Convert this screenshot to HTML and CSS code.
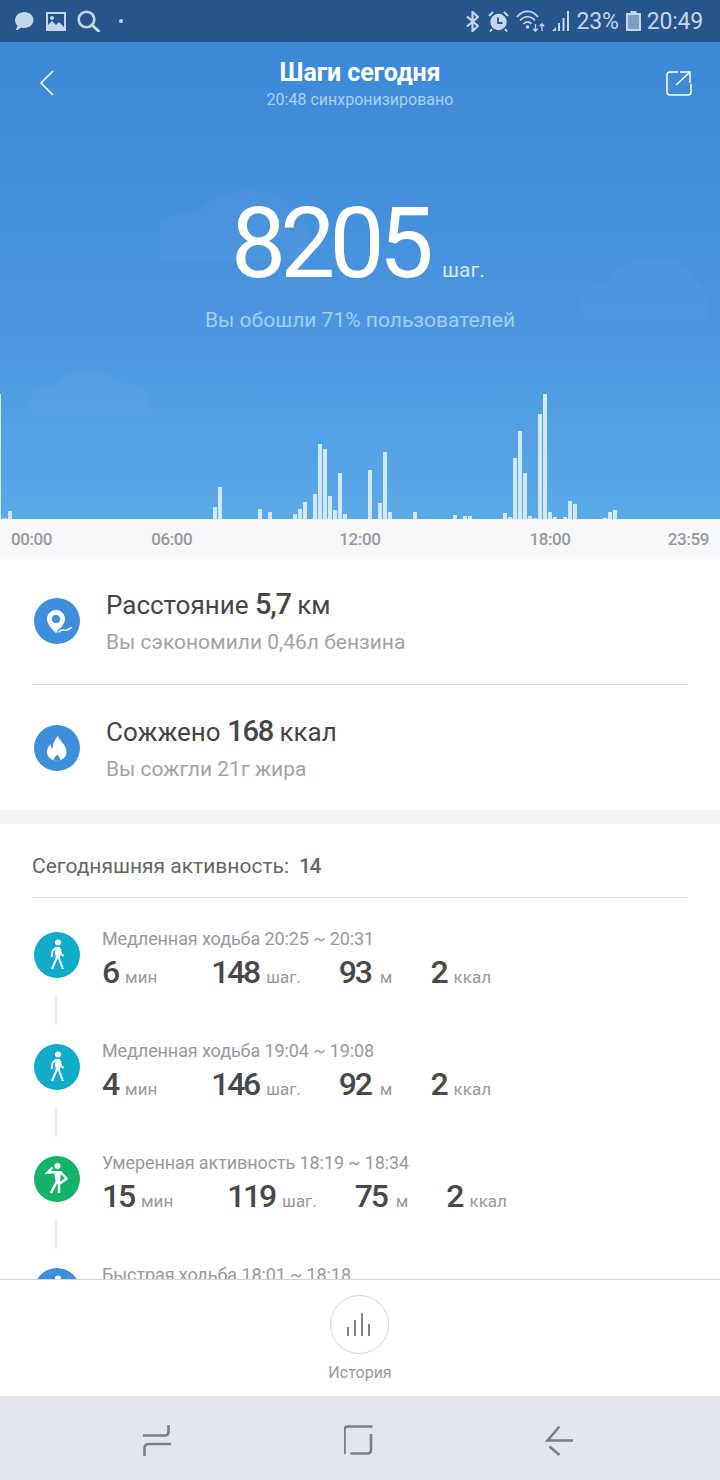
FILE: index.html
```html
<!DOCTYPE html>
<html lang="ru">
<head>
  <meta charset="UTF-8">
  <meta name="viewport" content="width=device-width, initial-scale=1.0">
  <title>Шаги сегодня</title>
  <link rel="stylesheet" href="styles.css">
</head>
<body>

  <div class="status-bar">
    <div class="status-left">
      <svg class="st-bubble" width="20" height="20" viewBox="0 0 20 20"><path d="M10.5 1C15.5 1 19.5 4.6 19.5 9S15.5 17 10.5 17c-1.200 0-2.300-.2-3.300-.6C5.500 18 3.500 19 1.500 19c1-1.200 1.700-2.600 1.800-4.400C1.900 13.100 1 11.200 1 9 1 4.600 5.500 1 10.500 1z"/></svg>
      <svg class="st-image" width="20" height="19" viewBox="0 0 20 19"><path fill-rule="evenodd" d="M0 0h20v19H0zM2 2v11l4-4 4 4 3-3 5 5V2zM6 4a2 2 0 1 1 0 4 2 2 0 0 1 0-4z"/></svg>
      <svg class="st-search" width="23" height="22" viewBox="0 0 23 22"><circle cx="9.500" cy="9.500" r="7.800" fill="none" stroke-width="2.600"/><path d="M15 15l6.500 6" fill="none" stroke-width="3" stroke-linecap="round"/></svg>
      <span class="st-dot"></span>
    </div>
    <div class="status-right">
      <svg class="st-bt" width="13" height="21" viewBox="0 0 13 21"><path d="M1 5.500l11 9.500-5.500 5V1L12 6 1 15.500" fill="none" stroke-width="2.200"/></svg>
      <svg class="st-alarm" width="21" height="21" viewBox="0 0 21 21"><circle cx="10.500" cy="11" r="8.200"/><path d="M1 5l4-4M20 5l-4-4M4 18l-2 2.500M17 18l2 2.500" fill="none" stroke-width="2"/><path class="st-alarm-hand" d="M10 6.500V12h4.500" fill="none" stroke-width="1.800"/></svg>
      <svg class="st-wifi" width="29" height="22" viewBox="0 0 29 22"><path d="M1 7C7-.5 16-.5 22 7M4 10.500c4.500-5 10.500-5 15 0M7.500 14c2.500-2.800 5.500-2.800 8 0" fill="none" stroke-width="1.700"/><circle cx="11.500" cy="17" r="1.800"/><path d="M19.500 14v7M17.300 18.800l2.200 2.400 2.200-2.400M26 21v-7M23.800 16.200l2.200-2.400 2.200 2.400" fill="none" stroke-width="1.300"/></svg>
      <svg class="st-signal" width="17" height="22" viewBox="0 0 17 22"><path d="M0 21l4-4v4zM6 13h2v8H6zM10.500 8h2v13h-2zM15 1h2v20h-2z"/></svg>
      <span class="st-text st-pct">23%</span>
      <svg class="st-battery" width="15" height="20" viewBox="0 0 15 20"><path d="M4.500 0h6v2h-6z"/><path d="M0 2h15v18H0z"/><path class="st-battery-level" d="M2 4h11v14H2z"/></svg>
      <span class="st-text">20:49</span>
    </div>
  </div>

  <section class="hero">
    <svg class="cloud cloud-a" width="150" height="70" viewBox="0 0 150 70"><path d="M0 70V36C8 24 22 22 38 24 46 8 68 0 92 0c20 0 34 8 40 20 10 4 18 12 18 26v24z"/></svg>
    <svg class="cloud cloud-b" width="125" height="60" viewBox="0 0 125 60"><path d="M0 60V40C4 24 18 22 28 24 36 8 54 0 76 0c20 0 34 10 38 22 6 4 11 10 11 18v20z"/></svg>
    <svg class="cloud cloud-c" width="120" height="46" viewBox="0 0 120 46"><path d="M0 46V26C3 17 14 14 24 16 30 5 44 0 60 0c14 0 25 5 30 13 16-2 28 6 30 18v15z"/></svg>

    <header class="topbar">
      <svg class="back-icon" width="15" height="26" viewBox="0 0 15 26"><path d="M14 1L2 13l12 12" fill="none" stroke-width="1.600"/></svg>
      <div class="topbar-title">
        <h1>Шаги сегодня</h1>
        <p>20:48 синхронизировано</p>
      </div>
      <svg class="share-icon" width="26" height="26" viewBox="0 0 26 26"><path d="M12 2H4Q1 2 1 5v17q0 3 3 3h18q3 0 3-3v-8" fill="none" stroke-width="1.500"/><path d="M10 15L23.500 2.500M14 2h10v11" fill="none" stroke-width="1.500"/></svg>
    </header>

    <div class="steps">
      <span class="steps-value">8205</span><span class="steps-unit">шаг.</span>
    </div>
    <p class="steps-note">Вы обошли 71% пользователей</p>

    <div class="chart">
      <i class="bar bar-edge" style="grid-column:1;height:125px"></i>
      <i class="bar" style="grid-column:2;height:1px"></i>
      <i class="bar" style="grid-column:3;height:8px"></i>
      <i class="bar" style="grid-column:44;height:12px"></i>
      <i class="bar" style="grid-column:45;height:32px"></i>
      <i class="bar" style="grid-column:53;height:10px"></i>
      <i class="bar" style="grid-column:55;height:7px"></i>
      <i class="bar" style="grid-column:60;height:5px"></i>
      <i class="bar" style="grid-column:61;height:10px"></i>
      <i class="bar" style="grid-column:62;height:17px"></i>
      <i class="bar" style="grid-column:64;height:25px"></i>
      <i class="bar" style="grid-column:65;height:75px"></i>
      <i class="bar" style="grid-column:66;height:70px"></i>
      <i class="bar" style="grid-column:67;height:23px"></i>
      <i class="bar" style="grid-column:68;height:9px"></i>
      <i class="bar" style="grid-column:69;height:46px"></i>
      <i class="bar" style="grid-column:70;height:5px"></i>
      <i class="bar" style="grid-column:75;height:49px"></i>
      <i class="bar" style="grid-column:77;height:16px"></i>
      <i class="bar" style="grid-column:78;height:67px"></i>
      <i class="bar" style="grid-column:79;height:7px"></i>
      <i class="bar" style="grid-column:84;height:7px"></i>
      <i class="bar" style="grid-column:92;height:4px"></i>
      <i class="bar" style="grid-column:94;height:3px"></i>
      <i class="bar" style="grid-column:95;height:3px"></i>
      <i class="bar" style="grid-column:102;height:6px"></i>
      <i class="bar" style="grid-column:103;height:2px"></i>
      <i class="bar" style="grid-column:104;height:61px"></i>
      <i class="bar" style="grid-column:105;height:88px"></i>
      <i class="bar" style="grid-column:106;height:46px"></i>
      <i class="bar" style="grid-column:107;height:3px"></i>
      <i class="bar" style="grid-column:108;height:1px"></i>
      <i class="bar" style="grid-column:109;height:105px"></i>
      <i class="bar" style="grid-column:110;height:125px"></i>
      <i class="bar" style="grid-column:111;height:7px"></i>
      <i class="bar" style="grid-column:112;height:2px"></i>
      <i class="bar" style="grid-column:114;height:2px"></i>
      <i class="bar" style="grid-column:115;height:18px"></i>
      <i class="bar" style="grid-column:116;height:15px"></i>
      <i class="bar" style="grid-column:122;height:1px"></i>
      <i class="bar" style="grid-column:123;height:7px"></i>
      <i class="bar" style="grid-column:124;height:9px"></i>
    </div>
  </section>

  <div class="axis">
    <span>00:00</span>
    <span class="axis-06">06:00</span>
    <span class="axis-12">12:00</span>
    <span class="axis-18">18:00</span>
    <span class="axis-end">23:59</span>
  </div>

  <section class="summary">
    <div class="summary-row">
      <svg class="round-icon" width="46" height="46" viewBox="0 0 46 46">
        <circle class="fill-blue" cx="23" cy="23" r="23"/>
        <path class="fill-white" fill-rule="evenodd" d="M22 12c-5 0-9 4-9 9 0 4.500 4.500 10 9 14 4.500-4 9-9.500 9-14 0-5-4-9-9-9zm0 5a4 4 0 1 1 0 8 4 4 0 0 1 0-8z"/>
        <path d="M25 34c3-4 5-.5 8-2 1.500-.8 2.500-2 4.500-2" fill="none" stroke="#3d8edd" stroke-width="4.500"/>
        <path d="M25 34c3-4 5-.5 8-2 1.500-.8 2.500-2 4.500-2" fill="none" stroke="#fff" stroke-width="1.500" stroke-linecap="round"/>
      </svg>
      <div class="summary-text">
        <p class="summary-title">Расстояние <b>5,7</b> км</p>
        <p class="summary-sub">Вы сэкономили 0,46л бензина</p>
      </div>
    </div>
    <div class="summary-row">
      <svg class="round-icon" width="46" height="46" viewBox="0 0 46 46">
        <circle class="fill-blue" cx="23" cy="23" r="23"/>
        <path class="fill-white" fill-rule="evenodd" d="M24 11c1 4.500 8.500 8.500 8.500 16 0 5.500-4.200 8.500-9.500 8.500S13 32.500 13 27c0-3.500 1.700-6 3.500-7.500.2 2 .8 3.300 2.200 4.200C18.500 19 20.500 14.500 24 11zm-1 19c-1.800 1.800-3.200 2.700-3.200 4.300 0 .6.200 1 .5 1.200h5.400c.3-.2.500-.6.500-1.200 0-1.600-1.400-2.500-2.700-4.300z"/>
      </svg>
      <div class="summary-text">
        <p class="summary-title">Сожжено <b>168</b> ккал</p>
        <p class="summary-sub">Вы сожгли 21г жира</p>
      </div>
    </div>
  </section>

  <section class="activity">
    <div class="activity-head">Сегодняшняя активность:<span>14</span></div>

    <div class="activity-item">
      <svg class="round-icon" width="46" height="46" viewBox="0 0 46 46">
        <circle class="fill-teal" cx="23" cy="23" r="23"/>
        <circle class="fill-white" cx="24" cy="10.500" r="3"/>
        <path class="fill-white" d="M22 15h4l.5 5-.5 6h-4l-1-5z"/>
        <path d="M22.500 15.500l-4 3.500-.8 6M23 25l-5 12M24.500 25l4.500 12M26 17l1 5 2.500 2" fill="none" stroke="#fff" stroke-width="2"/>
      </svg>
      <div class="activity-body">
        <p class="activity-title">Медленная ходьба 20:25 ~ 20:31</p>
        <div class="activity-stats">
          <span class="stat stat-time"><b>6</b> мин</span>
          <span class="stat stat-steps"><b>148</b> шаг.</span>
          <span class="stat stat-dist"><b>93</b> м</span>
          <span class="stat"><b>2</b> ккал</span>
        </div>
      </div>
    </div>
    <div class="activity-line"></div>

    <div class="activity-item">
      <svg class="round-icon" width="46" height="46" viewBox="0 0 46 46">
        <circle class="fill-teal" cx="23" cy="23" r="23"/>
        <circle class="fill-white" cx="24" cy="10.500" r="3"/>
        <path class="fill-white" d="M22 15h4l.5 5-.5 6h-4l-1-5z"/>
        <path d="M22.500 15.500l-4 3.500-.8 6M23 25l-5 12M24.500 25l4.500 12M26 17l1 5 2.500 2" fill="none" stroke="#fff" stroke-width="2"/>
      </svg>
      <div class="activity-body">
        <p class="activity-title">Медленная ходьба 19:04 ~ 19:08</p>
        <div class="activity-stats">
          <span class="stat stat-time"><b>4</b> мин</span>
          <span class="stat stat-steps"><b>146</b> шаг.</span>
          <span class="stat stat-dist"><b>92</b> м</span>
          <span class="stat"><b>2</b> ккал</span>
        </div>
      </div>
    </div>
    <div class="activity-line"></div>

    <div class="activity-item">
      <svg class="round-icon" width="46" height="46" viewBox="0 0 46 46">
        <circle class="fill-green" cx="23" cy="23" r="23"/>
        <circle class="fill-white" cx="23.500" cy="10" r="3"/>
        <path class="fill-white" d="M20 15h7l-1 13h-4z"/>
        <path d="M21 16l-7.500.5 5-5M26 15.500l6.500 7-6.500 5M22.500 26L17 37M25 27v10" fill="none" stroke="#fff" stroke-width="2.400"/>
      </svg>
      <div class="activity-body">
        <p class="activity-title">Умеренная активность 18:19 ~ 18:34</p>
        <div class="activity-stats">
          <span class="stat stat-time"><b>15</b> мин</span>
          <span class="stat stat-steps"><b>119</b> шаг.</span>
          <span class="stat stat-dist"><b>75</b> м</span>
          <span class="stat"><b>2</b> ккал</span>
        </div>
      </div>
    </div>
    <div class="activity-line"></div>

    <div class="activity-item">
      <svg class="round-icon" width="46" height="46" viewBox="0 0 46 46">
        <circle class="fill-blue" cx="23" cy="23" r="23"/>
        <circle class="fill-white" cx="24" cy="10.500" r="3"/>
      </svg>
      <div class="activity-body">
        <p class="activity-title">Быстрая ходьба 18:01 ~ 18:18</p>
      </div>
    </div>
  </section>

  <footer class="history">
    <div class="history-btn">
      <svg width="24" height="23" viewBox="0 0 24 23"><path d="M1 23v-9M8 23V7M15 23V0M22 23V11" fill="none" stroke="#828282" stroke-width="2"/></svg>
    </div>
    <span>История</span>
  </footer>

  <nav class="navbar">
    <svg width="30" height="32" viewBox="0 0 30 32"><path d="M26.500 1v7q0 3.500-3.500 3.500H1M29 20H7q-4.500 0-4.500 4v8" fill="none" stroke-width="2.600"/></svg>
    <svg width="30" height="30" viewBox="1.500 0 30 30"><path d="M2 29V5q0-3.500 3.500-3.500H30M8 28.500h17q3.500 0 3.500-3.500V9" fill="none" stroke-width="2.600"/></svg>
    <svg width="29" height="31" viewBox="0 0 29 31"><path d="M28 15.500H2.500L14.500 1.500M4.500 21.500l10 8.500" fill="none" stroke-width="2.600"/></svg>
  </nav>

</body>
</html>
```

FILE: styles.css
```css
* {
  box-sizing: border-box;
}

html,
body {
  height: 100%;
}

body {
  margin: 0;
  height: 1480px;
  display: flex;
  flex-direction: column;
  overflow: hidden;
  font-family: Roboto, "Noto Sans", sans-serif;
  background-color: #ffffff;
}

p,
h1 {
  margin: 0;
}

/* Status bar */
.status-bar {
  height: 42px;
  flex-shrink: 0;
  display: flex;
  align-items: center;
  justify-content: space-between;
  padding: 0 17px 0 14px;
  background-color: #27548a;
  color: #c6d6e9;
}

.status-bar svg {
  fill: #c6d6e9;
  stroke: #c6d6e9;
  stroke-width: 0;
  display: block;
}

.status-left,
.status-right {
  display: flex;
  align-items: center;
}

.st-image {
  margin-left: 12px;
}

.st-search {
  margin-left: 11px;
}

.st-dot {
  width: 4px;
  height: 4px;
  margin-left: 19px;
  border-radius: 50%;
  background-color: #c6d6e9;
}

.st-alarm {
  margin-left: 9px;
}

.st-alarm-hand {
  stroke: #27548a;
}

.st-wifi {
  margin-left: 7px;
}

.st-signal {
  margin-left: 7px;
}

.st-text {
  font-size: 23px;
  letter-spacing: -0.2px;
}

.st-pct {
  margin-left: 8px;
}

.st-battery {
  margin: 0 6px 0 7px;
}

.st-battery-level {
  fill: #7f9dbf;
}

/* Blue part */
.hero {
  position: relative;
  height: 477px;
  flex-shrink: 0;
  overflow: hidden;
  background: linear-gradient(to bottom, #3c89d8 0%, #4a94de 55%, #5aa9e8 100%);
  color: #ffffff;
}

.cloud {
  position: absolute;
  fill: rgba(255, 255, 255, 0.028);
  filter: blur(1.5px);
}

.cloud-a {
  left: 160px;
  top: 148px;
}

.cloud-b {
  left: 582px;
  top: 216px;
}

.cloud-c {
  left: 30px;
  top: 328px;
}

.topbar {
  position: relative;
  display: flex;
  justify-content: space-between;
  align-items: flex-start;
  padding: 27px 28px 0 39px;
}

.topbar svg {
  fill: none;
  stroke: #ffffff;
  flex-shrink: 0;
}

.back-icon {
  margin-top: 1px;
}

.topbar-title {
  margin-top: -10px;
  text-align: center;
}

.topbar-title h1 {
  font-size: 25px;
  line-height: 27px;
  font-weight: 700;
  letter-spacing: -0.1px;
}

.topbar-title p {
  margin-top: 5px;
  font-size: 16px;
  line-height: 18px;
  color: #a9cff5;
}

.share-icon {
  margin-top: 1px;
}

.steps {
  position: relative;
  display: flex;
  align-items: baseline;
  margin-top: 77px;
  padding-left: 231px;
}

.steps-value {
  font-size: 98px;
  line-height: 115px;
  letter-spacing: -5.8px;
}

.steps-unit {
  margin-left: 14px;
  font-size: 21px;
  color: #d5e7f9;
}

.steps-note {
  position: relative;
  margin-top: 7px;
  text-align: center;
  font-size: 21px;
  line-height: 24px;
  color: #a3cdf3;
}

.chart {
  position: absolute;
  left: -2px;
  bottom: 0;
  height: 125px;
  display: grid;
  grid-template-columns: repeat(144, 5px);
  align-items: end;
}

.bar {
  grid-row: 1;
  width: 4px;
  background-color: #cfe8fc;
}

.bar-edge {
  width: 2px;
  justify-self: start;
  margin-left: 1px;
}

/* Time axis */
.axis {
  height: 39px;
  flex-shrink: 0;
  display: flex;
  align-items: center;
  padding: 0 11px;
  background-color: #f6f7f9;
  font-size: 17px;
  font-weight: 500;
  letter-spacing: -0.4px;
  color: #999999;
}

.axis-06 {
  margin-left: 99px;
}

.axis-12 {
  margin-left: 147px;
}

.axis-18 {
  margin-left: 149px;
}

.axis-end {
  margin-left: auto;
}

/* Distance and calories */
.summary {
  height: 266px;
  flex-shrink: 0;
  padding: 0 32px;
  border-bottom: 14px solid #f2f3f5;
}

.summary-row {
  height: 125px;
  display: flex;
  align-items: center;
  padding-left: 2px;
}

.summary-row:first-child {
  height: 127px;
  border-bottom: 1px solid #dedede;
}

.round-icon {
  display: block;
  flex-shrink: 0;
}

.fill-blue {
  fill: #3d8edd;
}

.fill-teal {
  fill: #10abc9;
}

.fill-green {
  fill: #13b46a;
}

.fill-white {
  fill: #ffffff;
}

.summary-text {
  margin-left: 26px;
}

.summary-title {
  font-size: 26px;
  line-height: 32px;
  color: #454545;
}

.summary-title b {
  font-size: 29px;
  font-weight: 500;
  letter-spacing: -1.2px;
}

.summary-sub {
  margin-top: 9px;
  font-size: 21px;
  line-height: 24px;
  color: #a3a3a3;
}

/* Activity list */
.activity {
  flex: 1;
  min-height: 0;
  overflow: hidden;
  padding: 0 32px;
}

.activity-head {
  height: 74px;
  display: flex;
  align-items: center;
  margin-bottom: 34px;
  padding-top: 10px;
  border-bottom: 1px solid #dedede;
  font-size: 21px;
  color: #666666;
}

.activity-head span {
  margin-left: 10px;
  font-weight: 500;
  letter-spacing: -1.5px;
}

.activity-item {
  height: 46px;
  display: flex;
  padding-left: 2px;
}

.activity-body {
  margin-left: 22px;
  margin-top: -3px;
}

.activity-title {
  font-size: 18px;
  line-height: 20px;
  letter-spacing: -0.1px;
  color: #999999;
}

.activity-stats {
  display: flex;
  align-items: baseline;
  margin-top: 5px;
  font-size: 17px;
  color: #999999;
}

.stat b {
  font-size: 32px;
  line-height: 36px;
  font-weight: 500;
  letter-spacing: -2.300px;
  color: #484848;
  margin-right: 3px;
}

.stat-time {
  margin-right: 54px;
}

.stat-steps {
  margin-right: 38px;
}

.stat-dist {
  margin-right: 38px;
}

.stat-dist b {
  margin-right: 5px;
}

.activity-line {
  width: 2px;
  height: 30px;
  margin: 17px 0 19px 23px;
  background-color: #e8e8e8;
}

/* History button */
.history {
  height: 117px;
  flex-shrink: 0;
  display: flex;
  flex-direction: column;
  align-items: center;
  padding: 15px 2px 0 0;
  border-top: 1px solid #d4d4d4;
  background-color: #ffffff;
  font-size: 16px;
  color: #999999;
}

.history span {
  margin-left: 2px;
}

.history-btn {
  width: 59px;
  height: 59px;
  margin-bottom: 9px;
  display: flex;
  align-items: center;
  justify-content: center;
  border: 1px solid #d2d2d2;
  border-radius: 50%;
}

/* Android navigation */
.navbar {
  height: 84px;
  flex-shrink: 0;
  display: flex;
  align-items: center;
  justify-content: space-between;
  padding: 4px 146px 0 142px;
  background-color: #e4e6ef;
}

.navbar svg {
  fill: none;
  stroke: #7b7d87;
}
```
